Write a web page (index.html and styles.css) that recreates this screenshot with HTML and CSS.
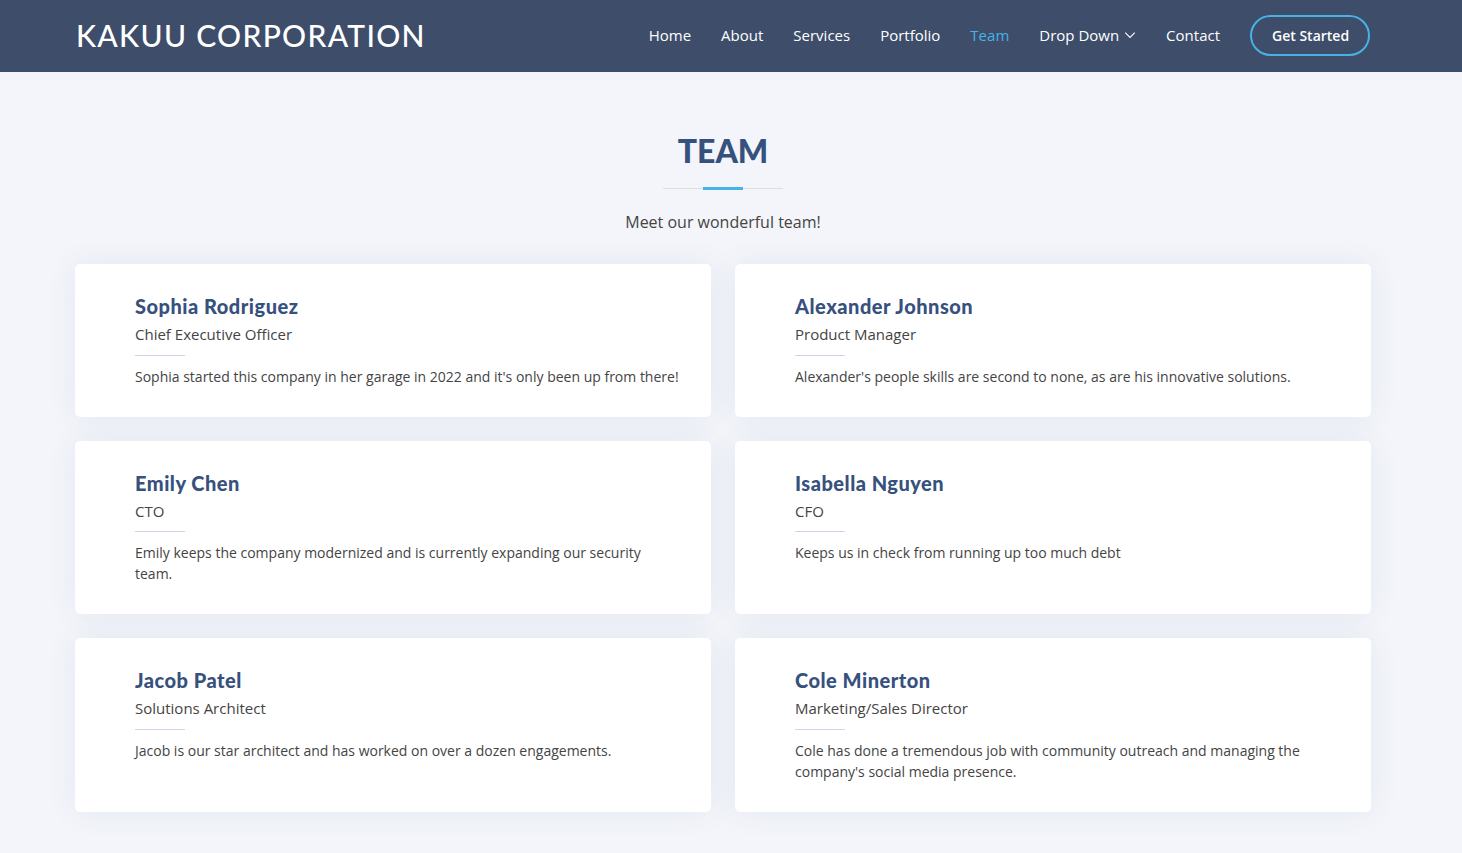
FILE: index.html
```html
<!DOCTYPE html>
<html lang="en">
<head>
<meta charset="utf-8">
<title>Kakuu Corporation - Team</title>
<link rel="stylesheet" href="styles.css">
</head>
<body>
<header class="header">
  <div class="container header-inner">
    <h1 class="logo">Kakuu Corporation</h1>
    <nav class="navbar">
      <ul class="nav-list">
        <li><a class="nav-link" href="#">Home</a></li>
        <li><a class="nav-link" href="#">About</a></li>
        <li><a class="nav-link" href="#">Services</a></li>
        <li><a class="nav-link" href="#">Portfolio</a></li>
        <li><a class="nav-link active" href="#">Team</a></li>
        <li><a class="nav-link" href="#">Drop Down <svg class="chevron" viewBox="0 0 16 16" width="12" height="12"><path d="M1.6 4.8 8 11.2l6.4-6.4" fill="none" stroke="currentColor" stroke-width="1.4"/></svg></a></li>
        <li><a class="nav-link" href="#">Contact</a></li>
        <li><a class="getstarted" href="#">Get Started</a></li>
      </ul>
    </nav>
  </div>
</header>

<main class="team">
  <div class="container">
    <div class="section-title">
      <h2>Team</h2>
      <p>Meet our wonderful team!</p>
    </div>
    <div class="grid">
      <div class="member">
        <h4>Sophia Rodriguez</h4>
        <span>Chief Executive Officer</span>
        <p>Sophia started this company in her garage in 2022 and it's only been up from there!</p>
      </div>
      <div class="member">
        <h4>Alexander Johnson</h4>
        <span>Product Manager</span>
        <p>Alexander's people skills are second to none, as are his innovative solutions.</p>
      </div>
      <div class="member">
        <h4>Emily Chen</h4>
        <span>CTO</span>
        <p>Emily keeps the company modernized and is currently expanding our security team.</p>
      </div>
      <div class="member">
        <h4>Isabella Nguyen</h4>
        <span>CFO</span>
        <p>Keeps us in check from running up too much debt</p>
      </div>
      <div class="member">
        <h4>Jacob Patel</h4>
        <span>Solutions Architect</span>
        <p>Jacob is our star architect and has worked on over a dozen engagements.</p>
      </div>
      <div class="member">
        <h4>Cole Minerton</h4>
        <span>Marketing/Sales Director</span>
        <p>Cole has done a tremendous job with community outreach and managing the company's social media presence.</p>
      </div>
    </div>
  </div>
</main>
</body>
</html>
```

FILE: styles.css
```css
* { box-sizing: border-box; }

html, body {
  margin: 0;
  padding: 0;
}

body {
  font-family: "Open Sans", "Liberation Sans", sans-serif;
  color: #444444;
  background: #f3f5fa;
  padding-right: 16px;
}

.container {
  max-width: 1296px;
  margin: 0 auto;
}

.header {
  background: #3d4d6a;
  height: 72px;
  margin-right: -16px;
  padding-right: 16px;
}

.header-inner {
  height: 72px;
  padding-bottom: 2px;
  display: flex;
  align-items: center;
  justify-content: space-between;
}

.logo {
  margin: 0;
  font-family: "Lato", "Noto Sans", sans-serif;
  font-size: 30px;
  font-weight: 500;
  letter-spacing: 1.3px;
  text-transform: uppercase;
  color: #ffffff;
  line-height: 1;
  padding-left: 1px;
}

.nav-list {
  display: flex;
  align-items: center;
  list-style: none;
  margin: 0;
  padding: 0;
}

.nav-link {
  display: flex;
  align-items: center;
  padding: 10px 0 10px 30px;
  font-size: 15px;
  font-weight: 500;
  color: #ffffff;
  text-decoration: none;
  white-space: nowrap;
}

.nav-link.active {
  color: #47b2e4;
}

.chevron {
  margin-left: 5px;
}

.getstarted {
  display: block;
  margin-left: 30px;
  margin-right: 1px;
  padding: 8px 20px;
  border: 2px solid #47b2e4;
  border-radius: 50px;
  color: #ffffff;
  font-size: 14px;
  font-weight: 600;
  line-height: 21px;
  text-decoration: none;
  width: 120px;
  text-align: center;
  white-space: nowrap;
}

.team {
  padding: 60px 0 41px;
}

.section-title {
  text-align: center;
  padding-bottom: 30px;
}

.section-title h2 {
  position: relative;
  margin: 0 0 20px;
  padding-bottom: 20px;
  font-family: "Lato", "Noto Sans", sans-serif;
  font-size: 32px;
  font-weight: 900;
  line-height: 1.2;
  text-transform: uppercase;
  color: #37517e;
}

.section-title h2::before {
  content: "";
  position: absolute;
  width: 120px;
  height: 1px;
  background: #dddddd;
  bottom: 1px;
  left: calc(50% - 60px);
}

.section-title h2::after {
  content: "";
  position: absolute;
  width: 40px;
  height: 3px;
  background: #47b2e4;
  bottom: 0;
  left: calc(50% - 20px);
}

.section-title p {
  margin: 0;
  font-size: 16px;
  line-height: 1.5;
}

.grid {
  display: grid;
  grid-template-columns: 1fr 1fr;
  gap: 24px;
}

.member {
  background: #ffffff;
  border-radius: 5px;
  box-shadow: 0 0 30px rgba(55, 81, 126, 0.08);
  padding: 30px 30px 30px 60px;
}

.member h4 {
  margin: 0 0 5px;
  font-family: "Lato", "Noto Sans", sans-serif;
  font-size: 20px;
  font-weight: 900;
  letter-spacing: 0.5px;
  line-height: 1.2;
  color: #37517e;
}

.member span {
  display: block;
  position: relative;
  padding-bottom: 10px;
  font-size: 15px;
  line-height: 1.5;
}

.member span::after {
  content: "";
  position: absolute;
  left: 0;
  bottom: 0;
  width: 50px;
  height: 1px;
  background: #cbd6e9;
}

.member p {
  margin: 10px 0 0;
  font-size: 14px;
  line-height: 1.5;
}
```
